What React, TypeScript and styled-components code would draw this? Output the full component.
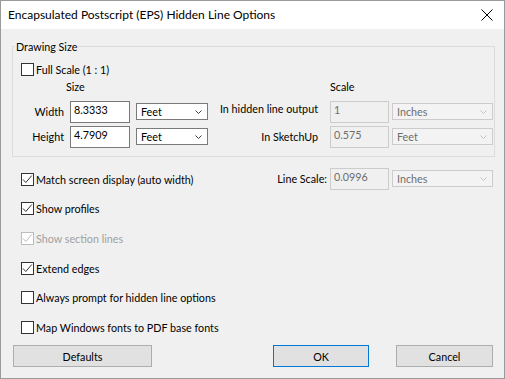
import React from 'react';
import styled, { createGlobalStyle } from 'styled-components';

const uiFont = `"Segoe UI", Lato, "Liberation Sans", sans-serif`;

const GlobalStyle = createGlobalStyle`
  html, body {
    margin: 0;
    padding: 0;
    background: #fff;
  }
  * {
    box-sizing: border-box;
  }
`;

const Window = styled.div`
  width: 505px;
  height: 379px;
  border: 1px solid #9a9a9a;
  background: #f0f0f0;
  display: flex;
  flex-direction: column;
  font-family: ${uiFont};
  font-size: 10.75px;
  color: #000;
`;

const TitleBar = styled.div`
  flex: none;
  height: 28px;
  background: #fff;
  display: flex;
  align-items: center;
  justify-content: space-between;
  padding-left: 7px;
`;

const Title = styled.span`
  font-size: 12px;
  line-height: 16px;
`;

const CloseButton = styled.div`
  width: 35px;
  height: 28px;
  display: flex;
  align-items: center;
  justify-content: center;
`;

const Body = styled.div`
  flex: 1;
  display: flex;
  flex-direction: column;
  padding: 10px 9px 11px 11px;
`;

const Group = styled.fieldset`
  margin: 0;
  padding: 0 0 8px 8px;
  border: 1px solid #dcdcdc;
  min-width: 0;
`;

const Legend = styled.legend`
  padding: 0 1px;
  margin-left: -6px;
  line-height: 15px;
`;

const CheckRow = styled.div<{ $disabled?: boolean }>`
  display: flex;
  align-items: center;
  gap: 2px;
  height: 22px;
  color: ${p => (p.$disabled ? '#a0a0a0' : '#000')};
`;

const Box = styled.span<{ $disabled?: boolean }>`
  width: 13px;
  height: 13px;
  flex: none;
  border: 1px solid ${p => (p.$disabled ? '#bcbcbc' : '#333')};
  background: #fff;
  display: flex;
  align-items: center;
  justify-content: center;
`;

const FirstRow = styled(CheckRow)`
  margin-top: 4px;
`;

const SizeGrid = styled.div`
  display: grid;
  grid-template-columns: 57px 66px 78px 116px 62px 101px;
  grid-template-rows: 18px 22px 22px;
  row-gap: 3px;
  margin-left: -8px;
`;

const Header = styled.div<{ $col: number; $shift?: number }>`
  grid-column: ${p => p.$col};
  grid-row: 1;
  align-self: start;
  line-height: 14px;
  margin-left: ${p => p.$shift ?? 0}px;
`;

const FieldLabel = styled.div<{ $pad: number; $row: number; $top?: boolean }>`
  grid-row: ${p => p.$row};
  justify-self: end;
  align-self: ${p => (p.$top ? 'start' : 'center')};
  margin-top: ${p => (p.$top ? '1px' : '0')};
  padding-right: ${p => p.$pad}px;
  line-height: 14px;
  white-space: nowrap;
`;

const TextBox = styled.div<{ $width: number; $row?: number; $disabled?: boolean }>`
  grid-row: ${p => p.$row ?? 'auto'};
  width: ${p => p.$width}px;
  height: 22px;
  border: 1px solid ${p => (p.$disabled ? '#cccccc' : '#7a7a7a')};
  background: ${p => (p.$disabled ? '#f0f0f0' : '#fff')};
  color: ${p => (p.$disabled ? '#6d6d6d' : '#000')};
  padding: 0 3px;
  line-height: 15px;
`;

const Select = styled.div<{ $width: number; $row?: number; $disabled?: boolean }>`
  grid-row: ${p => p.$row ?? 'auto'};
  width: ${p => p.$width}px;
  height: 17px;
  margin-top: 2px;
  align-self: start;
  border: 1px solid ${p => (p.$disabled ? '#cccccc' : '#7a7a7a')};
  background: ${p => (p.$disabled ? '#f3f3f3' : '#fff')};
  color: ${p => (p.$disabled ? '#6d6d6d' : '#000')};
  display: flex;
  align-items: center;
  justify-content: space-between;
  padding: 0 5px 0 4px;
  line-height: 15px;
`;

const Options = styled.div`
  display: flex;
  flex-direction: column;
  gap: 7.7px;
  margin-top: 11px;
  padding-left: 9px;
`;

const OptionLine = styled.div`
  display: flex;
  align-items: center;
  justify-content: space-between;
  padding-right: 2px;
`;

const LineScale = styled.div`
  display: flex;
  align-items: flex-start;
  gap: 3px;
  height: 22px;
`;

const LineScaleLabel = styled.span`
  align-self: center;
  line-height: 14px;
`;

const ButtonRow = styled.div`
  margin-top: auto;
  display: flex;
  align-items: center;
  gap: 27px;
  padding-right: 2px;
  margin-left: 1px;
`;

const Button = styled.button<{ $width: number; $default?: boolean }>`
  width: ${p => p.$width}px;
  height: 22px;
  padding: 0;
  border: 1px solid ${p => (p.$default ? '#0078d7' : '#adadad')};
  background: #e1e1e1;
  font-family: ${uiFont};
  font-size: 10.75px;
  color: #000;
`;

const Grow = styled.div`
  flex: 1;
  margin-right: -27px;
`;

const Chevron = ({ disabled }: { disabled?: boolean }) => (
  <svg width="7" height="4" viewBox="0 0 7 4">
    <polyline points="0.5,0.5 3.5,3.5 6.5,0.5" fill="none" stroke={disabled ? '#c4c4c4' : '#404040'} strokeWidth="1" />
  </svg>
);

const CheckBox = ({ checked, disabled, label }: { checked?: boolean; disabled?: boolean; label: string }) => (
  <>
    <Box $disabled={disabled}>
      {checked && (
        <svg width="11" height="11" viewBox="0 0 11 11">
          <polyline points="1,5.5 3.8,8.5 9.8,1.5" fill="none" stroke={disabled ? '#bcbcbc' : '#333'} strokeWidth="1" />
        </svg>
      )}
    </Box>
    <span>{label}</span>
  </>
);

const Option = (props: { checked?: boolean; disabled?: boolean; label: string }) => (
  <CheckRow $disabled={props.disabled}>
    <CheckBox {...props} />
  </CheckRow>
);

const App: React.FC = () => {
  return (
    <Window>
      <GlobalStyle />
      <TitleBar>
        <Title>Encapsulated Postscript (EPS) Hidden Line Options</Title>
        <CloseButton>
          <svg width="12" height="12" viewBox="0 0 12 12">
            <path d="M0.5 0.5 L11.5 11.5 M11.5 0.5 L0.5 11.5" stroke="#000" strokeWidth="1" />
          </svg>
        </CloseButton>
      </TitleBar>
      <Body>
        <Group>
          <Legend>Drawing Size</Legend>
          <FirstRow>
            <CheckBox label="Full Scale (1 : 1)" />
          </FirstRow>
          <SizeGrid>
            <Header $col={2} $shift={-4}>Size</Header>
            <Header $col={5}>Scale</Header>

            <FieldLabel $row={2} $pad={6}>Width</FieldLabel>
            <TextBox $row={2} $width={60}>8.3333</TextBox>
            <Select $row={2} $width={72}>Feet<Chevron /></Select>
            <FieldLabel $row={2} $pad={12} $top>In hidden line output</FieldLabel>
            <TextBox $row={2} $width={59} $disabled>1</TextBox>
            <Select $row={2} $width={101} $disabled>Inches<Chevron disabled /></Select>

            <FieldLabel $row={3} $pad={6}>Height</FieldLabel>
            <TextBox $row={3} $width={60}>4.7909</TextBox>
            <Select $row={3} $width={72}>Feet<Chevron /></Select>
            <FieldLabel $row={3} $pad={12}>In SketchUp</FieldLabel>
            <TextBox $row={3} $width={59} $disabled>0.575</TextBox>
            <Select $row={3} $width={101} $disabled>Feet<Chevron disabled /></Select>
          </SizeGrid>
        </Group>

        <Options>
          <OptionLine>
            <CheckRow>
              <CheckBox checked label="Match screen display (auto width)" />
            </CheckRow>
            <LineScale>
              <LineScaleLabel>Line Scale:</LineScaleLabel>
              <TextBox $width={59} $disabled>0.0996</TextBox>
              <Select $width={101} $disabled>Inches<Chevron disabled /></Select>
            </LineScale>
          </OptionLine>
          <Option checked label="Show profiles" />
          <Option checked disabled label="Show section lines" />
          <Option checked label="Extend edges" />
          <Option label="Always prompt for hidden line options" />
          <Option label="Map Windows fonts to PDF base fonts" />
        </Options>

        <ButtonRow>
          <Button $width={139}>Defaults</Button>
          <Grow />
          <Button $width={96} $default>OK</Button>
          <Button $width={97}>Cancel</Button>
        </ButtonRow>
      </Body>
    </Window>
  );
};

export default App;
